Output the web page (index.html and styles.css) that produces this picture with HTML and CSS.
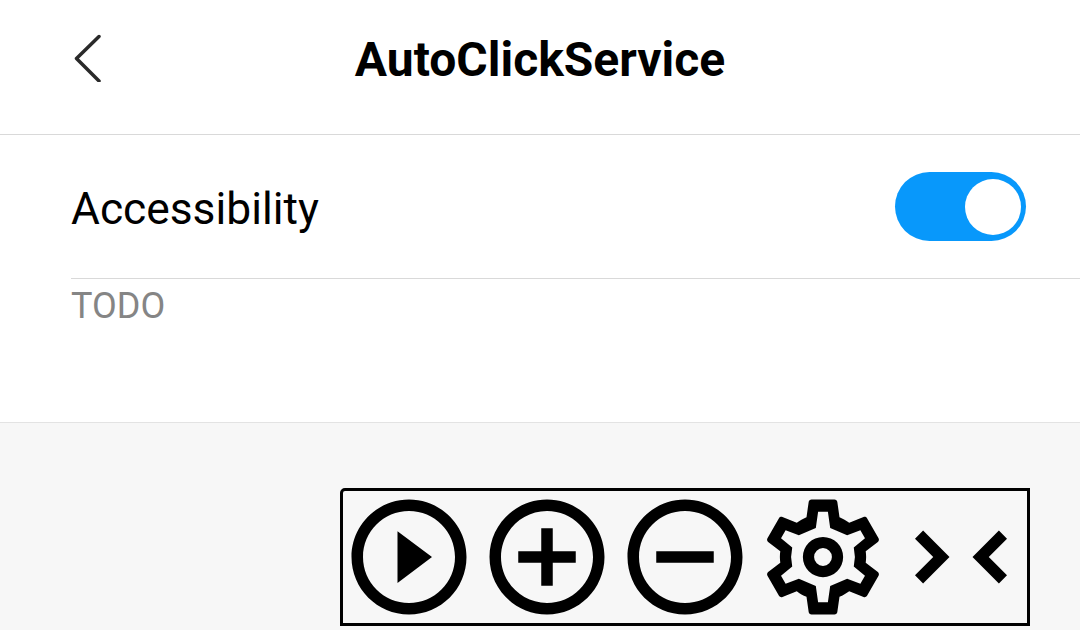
FILE: index.html
```html
<!DOCTYPE html>
<html lang="en">
<head>
    <meta charset="UTF-8">
    <meta name="viewport" content="width=device-width, initial-scale=1.0">
    <title>AutoClickService</title>
    <link rel="stylesheet" href="styles.css">
</head>
<body>

    <header class="header">
        <svg class="back" width="30" height="50" viewBox="0 0 30 50">
            <path d="M26 4.5 L3.5 26.5 L26 49" fill="none" stroke="#2a2a2a" stroke-width="3.5" stroke-linecap="round" stroke-linejoin="round"/>
        </svg>
        <h1 class="title">AutoClickService</h1>
    </header>

    <section class="panel">
        <div class="row">
            <span class="row-label">Accessibility</span>
            <span class="toggle"><span class="knob"></span></span>
        </div>
        <p class="summary">TODO</p>
    </section>

    <div class="toolbar-wrap">
        <div class="toolbar">
            <!-- play -->
            <svg class="tool" viewBox="0 0 24 24"><path d="M10 16.5l6-4.5-6-4.5v9zM12 2C6.48 2 2 6.48 2 12s4.48 10 10 10 10-4.48 10-10S17.52 2 12 2zm0 18c-4.41 0-8-3.59-8-8s3.59-8 8-8 8 3.59 8 8-3.59 8-8 8z"/></svg>
            <!-- add -->
            <svg class="tool" viewBox="0 0 24 24"><path d="M13 7h-2v4H7v2h4v4h2v-4h4v-2h-4V7zm-1-5C6.48 2 2 6.48 2 12s4.48 10 10 10 10-4.48 10-10S17.52 2 12 2zm0 18c-4.41 0-8-3.59-8-8s3.59-8 8-8 8 3.59 8 8-3.59 8-8 8z"/></svg>
            <!-- remove -->
            <svg class="tool" viewBox="0 0 24 24"><path d="M7 11v2h10v-2H7zm5-9C6.48 2 2 6.48 2 12s4.48 10 10 10 10-4.48 10-10S17.52 2 12 2zm0 18c-4.41 0-8-3.59-8-8s3.59-8 8-8 8 3.59 8 8-3.59 8-8 8z"/></svg>
            <!-- settings -->
            <svg class="tool" viewBox="0 0 24 24"><path fill-rule="evenodd" d="M19.43 12.98c.04-.32.07-.64.07-.98 0-.34-.03-.66-.07-.98l2.11-1.65c.19-.15.24-.42.12-.64l-2-3.46c-.09-.16-.26-.25-.44-.25-.06 0-.12.01-.17.03l-2.49 1c-.52-.4-1.08-.73-1.69-.98l-.38-2.65C14.46 2.18 14.25 2 14 2h-4c-.25 0-.46.18-.49.42l-.38 2.65c-.61.25-1.17.59-1.69.98l-2.49-1c-.06-.02-.12-.03-.18-.03-.17 0-.34.09-.43.25l-2 3.46c-.13.22-.07.49.12.64l2.11 1.65c-.04.32-.07.65-.07.98 0 .33.03.66.07.98l-2.11 1.65c-.19.15-.24.42-.12.64l2 3.46c.09.16.26.25.44.25.06 0 .12-.01.17-.03l2.49-1c.52.4 1.08.73 1.69.98l.38 2.65c.03.24.24.42.49.42h4c.25 0 .46-.18.49-.42l.38-2.65c.61-.25 1.17-.59 1.69-.98l2.49 1c.06.02.12.03.18.03.17 0 .34-.09.43-.25l2-3.46c.12-.22.07-.49-.12-.64l-2.11-1.65zM11.15 4.15H12.85L13.25 6.95 16.2 8.2 18.5 7.35 19.3 8.75 17.35 10.35 17.55 12 17.35 13.65 19.3 15.25 18.5 16.65 16.2 15.8 13.25 17.05 12.85 19.85H11.15L10.75 17.05 7.8 15.8 5.5 16.65 4.7 15.25 6.65 13.65 6.45 12 6.65 10.35 4.7 8.75 5.5 7.35 7.8 8.2 10.75 6.95zM12 8.5a3.5 3.5 0 1 0 0 7 3.5 3.5 0 0 0 0-7zm0 1.95a1.55 1.55 0 1 1 0 3.1 1.55 1.55 0 0 1 0-3.1z"/></svg>
            <!-- collapse -->
            <svg class="tool" viewBox="0 0 24 24"><path d="M5.41 7.41L10 12l-4.59 4.59L4 15.17 7.17 12 4 8.83zM18.59 7.41L14 12l4.59 4.59L20 15.17 16.83 12 20 8.83z"/></svg>
        </div>
    </div>

</body>
</html>
```

FILE: styles.css
```css
* {
    box-sizing: border-box;
}
body {
    margin: 0;
    height: 630px;
    overflow: hidden;
    font-family: Roboto, sans-serif;
    background: #f7f7f7;
    color: #000;
}
.header {
    display: flex;
    align-items: center;
    justify-content: center;
    position: relative;
    height: 135px;
    padding-bottom: 16px;
    background: #fff;
    border-bottom: 1px solid #d9d9d9;
}
.back {
    position: absolute;
    left: 73px;
    top: 32px;
}
.title {
    margin: 0;
    font-size: 48px;
    font-weight: 700;
    line-height: 53px;
}
.panel {
    height: 288px;
    background: #fff;
    border-bottom: 1px solid #e3e3e3;
    padding-left: 71px;
}
.row {
    display: flex;
    align-items: center;
    justify-content: space-between;
    height: 144px;
    padding-right: 54px;
    border-bottom: 1px solid #d9d9d9;
}
.row-label {
    font-size: 44.3px;
    line-height: 50px;
    margin-top: 5px;
}
.toggle {
    display: flex;
    justify-content: flex-end;
    align-items: center;
    width: 131px;
    height: 69px;
    padding-right: 5px;
    border-radius: 35px;
    background: #0898fb;
}
.knob {
    width: 56px;
    height: 56px;
    border-radius: 50%;
    background: #fff;
}
.summary {
    margin: 8px 0 0;
    font-size: 36px;
    line-height: 39px;
    color: #858585;
}
.toolbar-wrap {
    display: flex;
    justify-content: flex-end;
    padding: 65px 50px 0 0;
}
.toolbar {
    display: flex;
    width: 690px;
    height: 138px;
    position: relative;
    border: 3px solid #000;
    border-radius: 5px 0 0 0;
}
.tool {
    flex: none;
    width: 138px;
    height: 138px;
    margin: -3px 0;
}
.tool:first-child {
    margin-left: -3px;
}
```
